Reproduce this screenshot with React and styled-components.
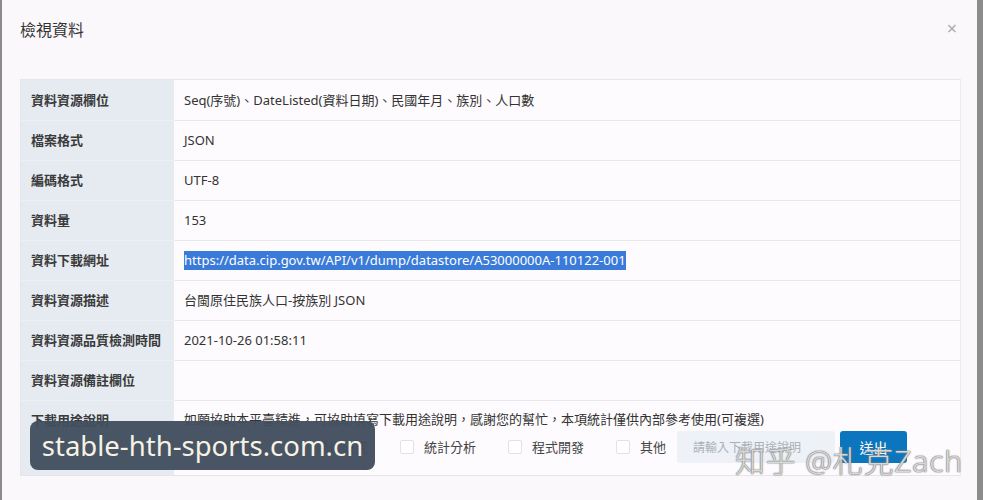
import React from 'react'
import styled, { createGlobalStyle } from 'styled-components'

const Global = createGlobalStyle`
  html, body {
    margin: 0;
    padding: 0;
    background: #fbf8fc;
  }
  body {
    font-family: "Noto Sans", "Noto Sans CJK TC", sans-serif;
    color: #333;
  }
`

const Frame = styled.div`
  position: relative;
  box-sizing: border-box;
  width: 983px;
  height: 500px;
  border-left: 2px solid #8a8a8a;
  border-right: 6px solid #8c8c8c;
  background: #fbf8fc;
  padding: 0 14px 0 18px;
  overflow: hidden;
`

const Header = styled.div`
  display: flex;
  align-items: center;
  justify-content: space-between;
  height: 58px;
`

const Title = styled.h4`
  margin: 0;
  font-size: 16px;
  font-weight: 400;
  color: #333;
`

const Close = styled.span`
  font-size: 18px;
  color: #aaa;
  line-height: 1;
  margin-right: 6px;
  margin-top: -2px;
`

const Table = styled.div`
  margin-top: 21px;
  display: grid;
  grid-template-columns: 153px 1fr;
  border: 1px solid #e6e6ea;
  border-right-color: #ececef;
  width: 941px;
  box-sizing: border-box;
`

const Label = styled.div`
  background: #e5ebf1;
  height: ${p => p.$tall ? '75px' : '40px'};
  box-sizing: border-box;
  border-top: ${p => p.$first ? 'none' : '1px solid #edf0f4'};
  padding: 0 10px;
  display: flex;
  align-items: ${p => p.$tall ? 'flex-start' : 'center'};
  padding-top: ${p => p.$tall ? '10px' : '0'};
  font-size: 13px;
  line-height: 19px;
  font-weight: 700;
  color: #3a3a3a;
  white-space: nowrap;
`

const Value = styled.div`
  background: #fdfbfd;
  height: ${p => p.$tall ? '75px' : '40px'};
  box-sizing: border-box;
  border-top: ${p => p.$first ? 'none' : '1px solid #e8e8ec'};
  padding: ${p => p.$tall ? '9px 10px 0' : '0 10px'};
  display: flex;
  flex-direction: column;
  justify-content: ${p => p.$tall ? 'flex-start' : 'center'};
  font-size: 13px;
  line-height: 19px;
  color: #333;
`

const Selected = styled.span`
  background: #3a7bd9;
  color: #fff;
  align-self: flex-start;
`

const Options = styled.div`
  display: flex;
  align-items: center;
  margin-top: 2px;
`

const Option = styled.label`
  display: flex;
  align-items: center;
  width: 108px;
  font-size: 13px;
  color: #444;
`

const Box = styled.span`
  width: 12px;
  height: 12px;
  border: 1px solid #e2e2e6;
  border-radius: 2px;
  background: #fff;
  margin-right: 10px;
`

const Field = styled.div`
  width: 158px;
  height: 32px;
  box-sizing: border-box;
  border-radius: 3px;
  background: #eef2f7;
  margin-left: -47px;
  padding-left: 16px;
  display: flex;
  align-items: center;
  font-size: 12px;
  color: #aab0b8;
`

const Send = styled.button`
  margin-left: 5px;
  width: 67px;
  height: 32px;
  border: none;
  border-radius: 3px;
  background: #0b76bd;
  color: #fff;
  font-size: 14px;
  font-family: inherit;
`

const SiteMark = styled.div`
  position: absolute;
  left: 28px;
  top: 421px;
  width: 345px;
  height: 49px;
  border-radius: 8px;
  background: rgba(66, 78, 94, 0.96);
  color: #f7f2e4;
  font-size: 27.5px;
  display: flex;
  align-items: center;
  justify-content: center;
`

const ZhihuMark = styled.div`
  position: absolute;
  left: 733px;
  top: 437px;
  font-size: 30px;
  font-weight: 300;
  color: rgba(235, 235, 235, 0.85);
  text-shadow: 0 0 1px #777, 0 0 1px #777, 0 0 2px #999;
  white-space: nowrap;
  letter-spacing: 0.8px;
`

const rows = [
  ['資料資源欄位', 'Seq(序號)、DateListed(資料日期)、民國年月、族別、人口數'],
  ['檔案格式', 'JSON'],
  ['編碼格式', 'UTF-8'],
  ['資料量', '153'],
  ['資料下載網址', 'https://data.cip.gov.tw/API/v1/dump/datastore/A53000000A-110122-001', true],
  ['資料資源描述', '台閩原住民族人口-按族別 JSON'],
  ['資料資源品質檢測時間', '2021-10-26 01:58:11'],
  ['資料資源備註欄位', ''],
]

const uses = ['商業應用', '學術研究', '統計分析', '程式開發', '其他']

export default function App() {
  return (
    <>
      <Global />
      <Frame>
        <Header>
          <Title>檢視資料</Title>
          <Close>×</Close>
        </Header>
        <Table>
          {rows.map(([k, v, sel], i) => (
            <React.Fragment key={k}>
              <Label $first={i === 0}>{k}</Label>
              <Value $first={i === 0}>{sel ? <Selected>{v}</Selected> : v}</Value>
            </React.Fragment>
          ))}
          <Label $tall>下載用途說明</Label>
          <Value $tall>
            <div>如願協助本平臺精進，可協助填寫下載用途說明，感謝您的幫忙，本項統計僅供內部參考使用(可複選)</div>
            <Options>
              {uses.map(u => (
                <Option key={u}><Box />{u}</Option>
              ))}
              <Field>請輸入下載用途說明</Field>
              <Send>送出</Send>
            </Options>
          </Value>
        </Table>
        <SiteMark>stable-hth-sports.com.cn</SiteMark>
        <ZhihuMark>知乎 @札克Zach</ZhihuMark>
      </Frame>
    </>
  )
}
